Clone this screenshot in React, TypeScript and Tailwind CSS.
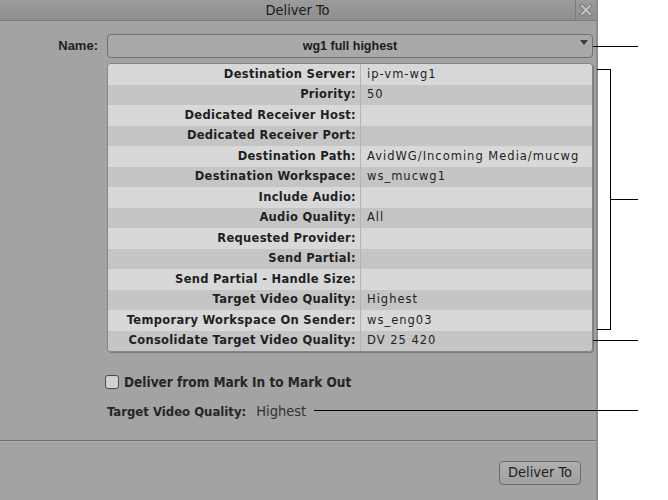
import React from "react";

const rows: [string, string][] = [
  ["Destination Server:", "ip-vm-wg1"],
  ["Priority:", "50"],
  ["Dedicated Receiver Host:", ""],
  ["Dedicated Receiver Port:", ""],
  ["Destination Path:", "AvidWG/Incoming Media/mucwg"],
  ["Destination Workspace:", "ws_mucwg1"],
  ["Include Audio:", ""],
  ["Audio Quality:", "All"],
  ["Requested Provider:", ""],
  ["Send Partial:", ""],
  ["Send Partial - Handle Size:", ""],
  ["Target Video Quality:", "Highest"],
  ["Temporary Workspace On Sender:", "ws_eng03"],
  ["Consolidate Target Video Quality:", "DV 25 420"],
];

const CloseIcon = () => (
  <svg width="14" height="14" viewBox="0 0 14 14">
    <path d="M3 3 L11 11 M11 3 L3 11" stroke="#7a7a7a" strokeWidth="4" strokeLinecap="square" />
    <path d="M3 3 L11 11 M11 3 L3 11" stroke="#c4c4c4" strokeWidth="2" strokeLinecap="square" />
  </svg>
);

const Annotations = () => (
  <svg className="absolute left-0 top-0 pointer-events-none" width="668" height="500">
    <g stroke="#000" strokeWidth="1" fill="none" shapeRendering="crispEdges">
      <path d="M593 46.5 H638" />
      <path d="M597 69.5 H610.5 V329.5 H597" />
      <path d="M610 199.5 H638" />
      <path d="M593 340.5 H638" />
      <path d="M314 410.5 H638" />
    </g>
  </svg>
);

export default function App() {
  return (
    <div className="relative w-[668px] h-[500px] bg-white flex">
      <div className="w-[598px] h-[500px] bg-[#a3a3a3] border-r-[2px] border-[#8c8c8c] flex flex-col">
        {/* title bar */}
        <div className="h-[21px] bg-gradient-to-b from-[#9c9c9c] to-[#8e8e8e] border-b border-[#7c7c7c] flex">
          <div className="flex-1 flex items-center justify-center pl-[20px] pt-[1px] text-[14.5px] text-[#1a1a1a] font-['DejaVu_Sans_Condensed','DejaVu_Sans',sans-serif]">
            Deliver To
          </div>
          <div className="w-[21px] border-l border-[#7c7c7c] flex items-center justify-center">
            <CloseIcon />
          </div>
        </div>

        {/* name row */}
        <div className="flex items-center mt-[13px]">
          <div className="w-[98px] text-right text-[13px] font-bold text-[#222] font-['Liberation_Sans',Arial,sans-serif]">
            Name:
          </div>
          <div className="ml-[9px] w-[486px] h-[24px] rounded-[4px] border border-[#707070] bg-[#a9a9a9] flex items-center justify-center relative text-[12.5px] font-bold text-[#1c1c1c] font-['Liberation_Sans',Arial,sans-serif]">
            wg1 full highest
            <svg className="absolute right-[4px] top-[5px]" width="8" height="5" viewBox="0 0 8 5">
              <path d="M0 0 H8 L4 5 Z" fill="#3c3c3c" />
            </svg>
          </div>
        </div>

        {/* details table */}
        <div className="ml-[107px] mt-[5px] w-[486px] rounded-[4px] border border-[#858585] shadow-[1px_1px_1px_rgba(0,0,0,0.25)] overflow-hidden text-[11.5px] text-[#1f1f1f] font-['DejaVu_Sans',Verdana,sans-serif]">
          {rows.map(([k, v], i) => (
            <div key={k} className={`flex h-[20.5px] items-center ${i % 2 === 0 ? "bg-[#d8d8d8]" : "bg-[#c5c5c5]"}`}>
              <div className="w-[253px] h-full flex items-center justify-end pr-[4px] font-bold tracking-[0.3px] border-r border-[#b4b4b4] whitespace-nowrap">
                {k}
              </div>
              <div className="flex-1 pl-[6px] whitespace-nowrap tracking-[1px]">{v}</div>
            </div>
          ))}
        </div>

        {/* checkbox */}
        <div className="flex items-center ml-[105px] mt-[20px] gap-[5px]">
          <div className="w-[14px] h-[14px] rounded-[3px] border border-[#4a4a4a] bg-[#d0d0d0]" />
          <span className="text-[13.5px] font-bold text-[#262626] font-['DejaVu_Sans_Condensed','DejaVu_Sans',sans-serif]">
            Deliver from Mark In to Mark Out
          </span>
        </div>

        <div className="flex items-center ml-[107px] mt-[9px] gap-[10px] text-[13px] font-['DejaVu_Sans_Condensed','DejaVu_Sans',sans-serif]">
          <span className="font-bold text-[#262626]">Target Video Quality:</span>
          <span className="text-[14.5px] text-[#333]">Highest</span>
        </div>

        <div className="mt-[17px] border-t border-[#6f6f6f] border-b border-b-[#b2b2b2]" />

        <div className="flex justify-end pr-[15px] mt-[19px]">
          <button className="w-[82px] h-[24px] rounded-[4px] border border-[#6a6a6a] bg-gradient-to-b from-[#b0b0b0] to-[#a0a0a0] text-[14.5px] text-[#1e1e1e] font-['DejaVu_Sans_Condensed','DejaVu_Sans',sans-serif]">
            Deliver To
          </button>
        </div>
      </div>
      <Annotations />
    </div>
  );
}
